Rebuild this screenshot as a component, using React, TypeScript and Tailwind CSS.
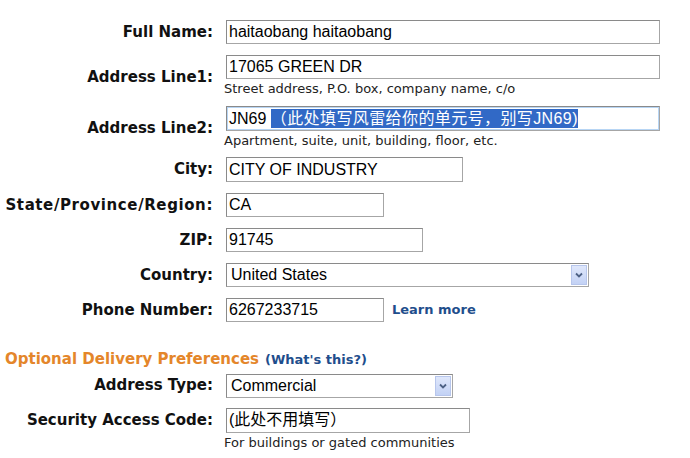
import React from "react"

const label = "w-[213px] shrink-0 text-right font-bold text-[15px] text-[#111] [font-family:'DejaVu_Sans',Verdana,sans-serif]"
const field = "h-[24px] border border-[#a6a6a6] border-t-[#8a8a8a] border-l-[#8a8a8a] bg-white pl-[2px] flex items-center text-[16px] text-black [font-family:'Liberation_Sans','Noto_Sans_CJK_SC',Arial,sans-serif] leading-none whitespace-nowrap"
const hint = "text-[13px] text-[#222] -ml-[2px] [font-family:'DejaVu_Sans',Verdana,sans-serif] leading-[20px]"

function Row({ name, children, className = "", labelClass = "" }: { name: string; children: React.ReactNode; className?: string; labelClass?: string }) {
    return (
        <div className={`flex items-center gap-[13px] ${className}`}>
            <div className={`${label} ${labelClass}`}>{name}</div>
            <div className="flex flex-col">{children}</div>
        </div>
    )
}

function Select({ value, width }: { value: string; width: string }) {
    return (
        <div className={`${field} ${width} justify-between pl-[4px] pr-[1px]`}>
            <span>{value}</span>
            <span className="w-[16px] h-[20px] bg-gradient-to-b from-[#dfe7fb] to-[#c3d2f5] border border-[#b7c6ec] flex items-center justify-center">
                <svg width="8" height="6" viewBox="0 0 8 6">
                    <path d="M1 1.5 L4 4.5 L7 1.5" stroke="#4d6185" strokeWidth="1.8" fill="none" />
                </svg>
            </span>
        </div>
    )
}

export default function App() {
    return (
        <div className="w-[690px] h-[458px] bg-white pt-[20px] overflow-hidden">
            <Row name="Full Name:">
                <div className={`${field} w-[434px]`}>haitaobang haitaobang</div>
            </Row>
            <Row name="Address Line1:" className="mt-[11px]">
                <div className={`${field} w-[434px]`}>17065 GREEN DR</div>
                <div className={hint}>Street address, P.O. box, company name, c/o</div>
            </Row>
            <Row name="Address Line2:" className="mt-[7px]">
                <div className={`${field} w-[434px] h-[25px] border-[#7eb4ea] border-t-[#7eb4ea] border-l-[#7eb4ea] shadow-[inset_0_0_0_1px_#b7d5f4]`}>
                    <span>JN69&nbsp;</span>
                    <span className="bg-[#3169c6] text-white h-[19px] flex items-center tracking-[0.4px]">（此处填写风雷给你的单元号，别写JN69)</span>
                </div>
                <div className={hint}>Apartment, suite, unit, building, floor, etc.</div>
            </Row>
            <Row name="City:" className="mt-[6px]">
                <div className={`${field} w-[237px] h-[25px]`}>CITY OF INDUSTRY</div>
            </Row>
            <Row name="State/Province/Region:" className="mt-[11px]" labelClass="tracking-[0.6px]">
                <div className={`${field} w-[158px]`}>CA</div>
            </Row>
            <Row name="ZIP:" className="mt-[11px]">
                <div className={`${field} w-[197px]`}>91745</div>
            </Row>
            <Row name="Country:" className="mt-[11px]">
                <Select value="United States" width="w-[363px] h-[23px]" />
            </Row>
            <Row name="Phone Number:" className="mt-[11px]">
                <div className="flex items-center gap-[8px]">
                    <div className={`${field} w-[158px]`}>6267233715</div>
                    <a className="text-[13px] font-bold text-[#1f4e8c] [font-family:'DejaVu_Sans',Verdana,sans-serif]">Learn more</a>
                </div>
            </Row>
            <div className="mt-[26px] pl-[5px] flex items-baseline gap-[6px] [font-family:'DejaVu_Sans',Verdana,sans-serif] font-bold">
                <span className="text-[15px] text-[#e4862a]">Optional Delivery Preferences</span>
                <span className="text-[13px] text-[#1f4e8c]">(What's this?)</span>
            </div>
            <Row name="Address Type:" className="mt-[3px] gap-[11px]">
                <Select value="Commercial" width="w-[227px]" />
            </Row>
            <Row name="Security Access Code:" className="mt-[10px]">
                <div className={`${field} w-[244px] h-[25px]`}>(此处不用填写）</div>
            </Row>
            <div className={`${hint} ml-[224px]`}>For buildings or gated communities</div>
        </div>
    )
}
